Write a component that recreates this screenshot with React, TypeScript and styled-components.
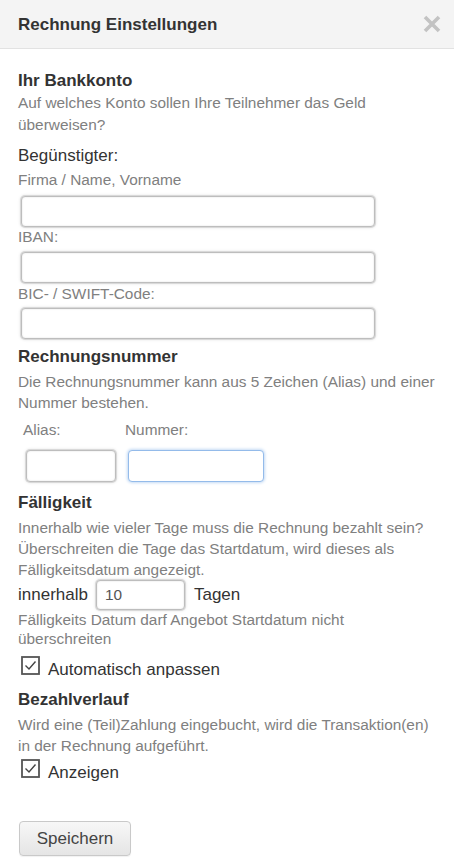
import React from "react";
import styled, { createGlobalStyle } from "styled-components";

const Global = createGlobalStyle`
  html, body { margin: 0; padding: 0; background: #fff; }
  body { font-family: "Liberation Sans", Arial, sans-serif; color: #333; }
  * { box-sizing: border-box; }
`;

const Dialog = styled.div`
  width: 454px;
  min-height: 865px;
  background: #fff;
`;

const Header = styled.div`
  height: 49px;
  display: flex;
  align-items: center;
  justify-content: space-between;
  padding: 2px 10px 0 18px;
  background: #f4f4f4;
  border-bottom: 1px solid #e2e2e2;
`;

const Title = styled.h1`
  margin: 0;
  font-size: 17px;
  font-weight: bold;
  color: #333;
  line-height: 22px;
`;

const Close = styled.button`
  width: 24px;
  height: 24px;
  padding: 0;
  border: 0;
  background: transparent;
  display: flex;
  align-items: center;
  justify-content: center;
  margin-top: -3px;
`;

const Body = styled.div`
  padding: 21px 16px 0 18px;
  display: flex;
  flex-direction: column;
`;

const Heading = styled.h2<{ $mt?: number }>`
  margin: ${(p) => p.$mt ?? 0}px 0 0 0;
  font-size: 17px;
  font-weight: bold;
  line-height: 22px;
  color: #333;
`;

const Desc = styled.p<{ $mt?: number; $lh?: number }>`
  margin: ${(p) => p.$mt ?? 3}px 0 0 0;
  font-size: 15.4px;
  line-height: ${(p) => p.$lh ?? 21}px;
  color: #808080;
`;

const Hint = styled.p`
  margin: 0;
  font-size: 15.4px;
  line-height: 19px;
  color: #808080;
  max-width: 400px;
`;

const Label = styled.div<{ $mt?: number }>`
  margin-top: ${(p) => p.$mt ?? 0}px;
  font-size: 17px;
  line-height: 22px;
  color: #333;
`;

const FieldLabel = styled.div<{ $mt?: number }>`
  margin-top: ${(p) => p.$mt ?? 0}px;
  font-size: 15.4px;
  line-height: 20px;
  color: #808080;
`;

const Input = styled.input<{ $w: number; $h?: number; $focus?: boolean; $ml?: number; $mt?: number }>`
  display: block;
  width: ${(p) => p.$w}px;
  height: ${(p) => p.$h ?? 31}px;
  margin: ${(p) => p.$mt ?? 5}px 0 0 ${(p) => p.$ml ?? 3}px;
  padding: 0 8px;
  font-family: "Liberation Sans", Arial, sans-serif;
  font-size: 15.4px;
  color: #555;
  background: #fff;
  border-radius: 4px;
  outline: none;
  border: 1px solid ${(p) => (p.$focus ? "#94bbea" : "#bdbdbd")};
  box-shadow: ${(p) =>
    p.$focus
      ? "0 0 3px 1px #c4daf4"
      : "0 0 0 1px #d9d9d9, 0 0 3px 1px #e6e6e6, inset 0 0 2px #dedede"};
`;

const AliasGrid = styled.div`
  margin-top: 7px;
  display: grid;
  grid-template-columns: 102px auto;
  margin-left: 5px;
  justify-content: start;
`;

const AliasCol = styled.div`
  display: flex;
  flex-direction: column;
`;

const InlineRow = styled.div`
  margin-top: 0px;
  display: flex;
  align-items: center;
  font-size: 17px;
  color: #333;
  line-height: 22px;
`;

const InlineText = styled.span<{ $ml?: number }>`
  margin-left: ${(p) => p.$ml ?? 0}px;
`;

const CheckRow = styled.label<{ $mt: number }>`
  margin-top: ${(p) => p.$mt}px;
  display: flex;
  align-items: flex-start;
  gap: 8px;
  padding-left: 3px;
  font-size: 17px;
  color: #333;
`;

const CheckText = styled.span`
  margin-top: 2px;
  line-height: 24px;
`;

const Box = styled.span`
  width: 19px;
  height: 19px;
  display: block;
  flex: none;
`;

const Footer = styled.div`
  margin-top: 36px;
  margin-left: 1px;
`;

const Button = styled.button`
  width: 112px;
  height: 35px;
  font-family: "Liberation Sans", Arial, sans-serif;
  font-size: 17px;
  color: #444;
  border: 1px solid #c9c9c9;
  border-radius: 4px;
  background: linear-gradient(#f7f7f7, #e5e5e5);
  box-shadow: 0 1px 1px rgba(0, 0, 0, 0.06);
  padding: 0;
`;

const Checkbox = () => (
  <Box>
    <svg width="19" height="19" viewBox="0 0 19 19">
      <rect x="1" y="1" width="17" height="17" fill="#fff" stroke="#555" strokeWidth="1.8" />
      <path d="M4.5 9.5 L8 13 L14.5 5.5" fill="none" stroke="#444" strokeWidth="1.4" />
    </svg>
  </Box>
);

export default function App() {
  return (
    <Dialog>
      <Global />
      <Header>
        <Title>Rechnung Einstellungen</Title>
        <Close aria-label="close">
          <svg width="18" height="18" viewBox="0 0 18 18">
            <path d="M2 2 L16 16 M16 2 L2 16" stroke="#c3c3c3" strokeWidth="3.6" strokeLinecap="butt" />
          </svg>
        </Close>
      </Header>
      <Body>
        <Heading>Ihr Bankkonto</Heading>
        <Desc $mt={0} $lh={22}>Auf welches Konto sollen Ihre Teilnehmer das Geld überweisen?</Desc>
        <Label $mt={9}>Begünstigter:</Label>
        <FieldLabel $mt={3}>Firma / Name, Vorname</FieldLabel>
        <Input $w={354} $mt={6} />
        <FieldLabel $mt={0}>IBAN:</FieldLabel>
        <Input $w={354} $mt={5} />
        <FieldLabel $mt={1}>BIC- / SWIFT-Code:</FieldLabel>
        <Input $w={354} $mt={4} />
        <Heading $mt={7}>Rechnungsnummer</Heading>
        <Desc>Die Rechnungsnummer kann aus 5 Zeichen (Alias) und einer Nummer bestehen.</Desc>
        <AliasGrid>
          <AliasCol>
            <FieldLabel>Alias:</FieldLabel>
            <Input $w={90} $h={32} $mt={10} $ml={3} />
          </AliasCol>
          <AliasCol>
            <FieldLabel>Nummer:</FieldLabel>
            <Input $w={136} $h={32} $mt={10} $ml={3} $focus />
          </AliasCol>
        </AliasGrid>
        <Heading $mt={10}>Fälligkeit</Heading>
        <Desc>
          Innerhalb wie vieler Tage muss die Rechnung bezahlt sein? Überschreiten die Tage das
          Startdatum, wird dieses als Fälligkeitsdatum angezeigt.
        </Desc>
        <InlineRow>
          <InlineText>innerhalb</InlineText>
          <Input $w={89} $h={30} $mt={0} $ml={8} defaultValue="10" />
          <InlineText $ml={9}>Tagen</InlineText>
        </InlineRow>
        <Hint>Fälligkeits Datum darf Angebot Startdatum nicht überschreiten</Hint>
        <CheckRow $mt={8}>
          <Checkbox />
          <CheckText>Automatisch anpassen</CheckText>
        </CheckRow>
        <Heading $mt={7}>Bezahlverlauf</Heading>
        <Desc>Wird eine (Teil)Zahlung eingebucht, wird die Transaktion(en) in der Rechnung aufgeführt.</Desc>
        <CheckRow $mt={3}>
          <Checkbox />
          <CheckText>Anzeigen</CheckText>
        </CheckRow>
        <Footer>
          <Button>Speichern</Button>
        </Footer>
      </Body>
    </Dialog>
  );
}
